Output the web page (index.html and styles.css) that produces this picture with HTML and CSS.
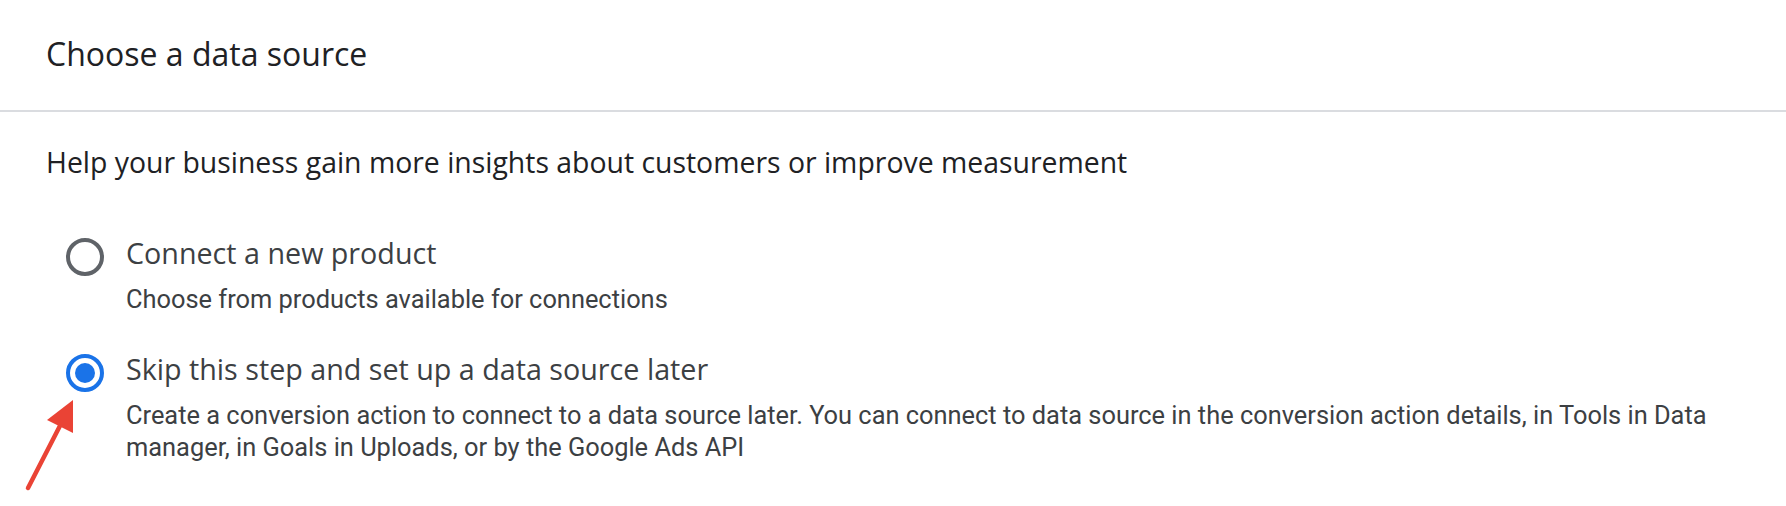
FILE: index.html
```html
<!DOCTYPE html>
<html lang="en">
<head>
<meta charset="utf-8">
<title>Choose a data source</title>
<link rel="stylesheet" href="styles.css">
</head>
<body>
<div class="page">
  <header class="header">
    <h1 class="title">Choose a data source</h1>
  </header>
  <main class="content">
    <p class="lead">Help your business gain more insights about customers or improve measurement</p>
    <div class="options">
      <div class="option">
        <span class="radio"></span>
        <div class="option-text">
          <div class="label">Connect a new product</div>
          <div class="desc">Choose from products available for connections</div>
        </div>
      </div>
      <div class="option">
        <span class="radio checked"></span>
        <div class="option-text">
          <div class="label">Skip this step and set up a data source later</div>
          <div class="desc">Create a conversion action to connect to a data source later. You can connect to data source in the conversion action details, in Tools in Data manager, in Goals in Uploads, or by the Google Ads API</div>
        </div>
      </div>
    </div>
  </main>
  <svg class="arrow" width="80" height="110" viewBox="0 0 80 110" aria-hidden="true">
    <line x1="8" y1="98" x2="44" y2="28" stroke="#ea4335" stroke-width="4.5" stroke-linecap="round"/>
    <polygon points="53,10 27,30 53,43" fill="#ea4335"/>
  </svg>
</div>
</body>
</html>
```

FILE: styles.css
```css
html, body {
  margin: 0;
  padding: 0;
  background: #ffffff;
}

.page {
  position: relative;
  width: 1786px;
  height: 506px;
  overflow: hidden;
}

.header {
  box-sizing: border-box;
  height: 112px;
  display: flex;
  align-items: center;
  padding: 0 0 4px 46px;
  border-bottom: 2px solid #dadce0;
}

.title {
  margin: 0;
  font-family: "Open Sans", "Noto Sans", sans-serif;
  font-weight: 400;
  font-size: 32px;
  color: #202124;
}

.content {
  padding: 0 46px;
}

.lead {
  margin: 32px 0 0;
  font-family: "Open Sans", "Noto Sans", sans-serif;
  font-size: 28.4px;
  line-height: 36px;
  color: #202124;
}

.options {
  display: flex;
  flex-direction: column;
  gap: 36px;
  margin-top: 55px;
  padding-left: 20px;
}

.option {
  display: grid;
  grid-template-columns: 38px 1fr;
  column-gap: 22px;
  align-items: start;
}

.radio {
  box-sizing: border-box;
  width: 38px;
  height: 38px;
  margin-top: 3px;
  border-radius: 50%;
  border: 4px solid #5f6368;
  display: flex;
  align-items: center;
  justify-content: center;
}

.radio.checked {
  border-color: #1a73e8;
}

.radio.checked::after {
  content: "";
  width: 20px;
  height: 20px;
  border-radius: 50%;
  background: #1a73e8;
}

.label {
  font-family: "Open Sans", "Noto Sans", sans-serif;
  font-size: 28.7px;
  line-height: 36px;
  color: #3c4043;
}

.desc {
  margin-top: 12px;
  font-family: Roboto, "Liberation Sans", sans-serif;
  font-size: 25.4px;
  line-height: 32px;
  color: #3c4043;
}

.arrow {
  position: absolute;
  left: 20px;
  top: 390px;
}
```
